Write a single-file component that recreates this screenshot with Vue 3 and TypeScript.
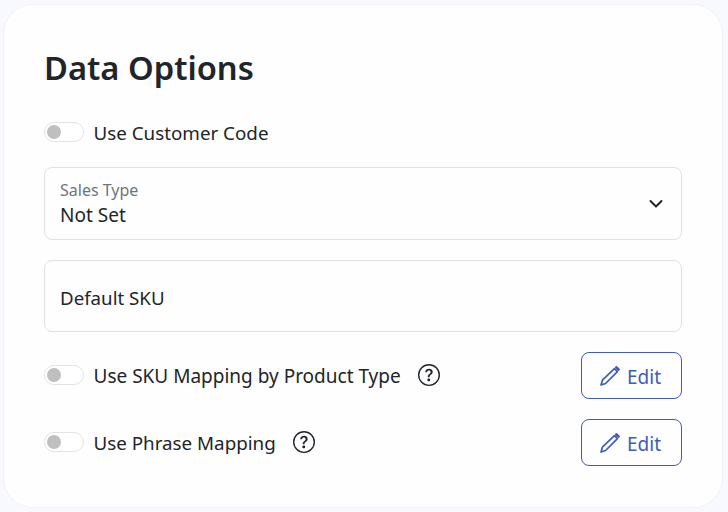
<script setup lang="ts">
const rows = [
  { label: "Use SKU Mapping by Product Type", tight: false },
  { label: "Use Phrase Mapping", tight: true },
];
</script>

<template>
  <div class="card">
    <h1 class="title">Data Options</h1>
    <div class="toggle-row first">
      <span class="switch"><span class="knob"></span></span>
      <span class="label tight">Use Customer Code</span>
    </div>
    <div class="field select">
      <div class="stack">
        <span class="small">Sales Type</span>
        <span class="value">Not Set</span>
      </div>
      <svg class="chev" width="16" height="16" viewBox="0 0 16 16" fill="none" stroke="#212529" stroke-width="2" stroke-linecap="round" stroke-linejoin="round"><path d="M2.5 5 8 10.5 13.5 5" /></svg>
    </div>
    <div class="field sku"><span class="value">Default SKU</span></div>
    <div v-for="r in rows" :key="r.label" class="map-row">
      <div class="toggle-row">
        <span class="switch"><span class="knob"></span></span>
        <span class="label" :class="{ tight: r.tight }">{{ r.label }}</span>
        <svg class="help" width="22" height="22" viewBox="0 0 16 16" fill="#212529">
          <path d="M8 15A7 7 0 1 1 8 1a7 7 0 0 1 0 14zm0 1A8 8 0 1 0 8 0a8 8 0 0 0 0 16z" />
          <path d="M5.255 5.786a.237.237 0 0 0 .241.247h.825c.138 0 .248-.113.266-.25.09-.656.54-1.134 1.342-1.134.686 0 1.314.343 1.314 1.168 0 .635-.374.927-.965 1.371-.673.489-1.206 1.06-1.168 1.987l.003.217a.25.25 0 0 0 .25.246h.811a.25.25 0 0 0 .25-.25v-.105c0-.718.273-.927 1.01-1.486.609-.463 1.244-.977 1.244-2.056 0-1.511-1.276-2.241-2.673-2.241-1.267 0-2.655.59-2.75 2.286zm1.557 5.763c0 .533.425.927 1.01.927.609 0 1.028-.394 1.028-.927 0-.552-.42-.94-1.029-.94-.584 0-1.009.388-1.009.94z" />
        </svg>
      </div>
      <button class="edit" type="button">
        <svg width="20" height="20" viewBox="0 0 20 20" fill="none" stroke="#3f5bbd">
          <path stroke-width="1.7" stroke-linejoin="round" d="M1 19 2.4 14.2 14.4 2.6 17.4 5.6 5.6 17.5Z" />
          <path stroke-width="2.8" stroke-linecap="round" d="M16.4 1.6 18.4 3.6" />
        </svg>
        <span class="edit-text">Edit</span>
      </button>
    </div>
  </div>
</template>

<style scoped>
.card {
  box-sizing: border-box;
  width: 720px;
  height: 504px;
  margin: 4px 0 0 3px;
  padding: 40px;
  background: #fefeff;
  border: 1px solid #f1f2f8;
  border-radius: 30px;
  font-family: "Noto Sans", sans-serif;
  color: #212529;
  display: flex;
  flex-direction: column;
}
.title {
  margin: 0;
  font-size: 32.7px;
  line-height: 46px;
  font-weight: 600;
}
.toggle-row {
  display: flex;
  align-items: center;
}
.first {
  margin-top: 30px;
  height: 24px;
}
.switch {
  box-sizing: border-box;
  width: 40px;
  height: 20px;
  margin-top: -2px;
  border: 1px solid #e3e3e3;
  border-radius: 10px;
  background: #fff;
  display: flex;
  align-items: center;
  padding-left: 2px;
  flex: none;
}
.knob {
  width: 14px;
  height: 14px;
  border-radius: 50%;
  background: #bfbfbf;
}
.label {
  margin-left: 9.5px;
  font-size: 19px;
  line-height: 24px;
}
.label.tight {
  font-size: 18.8px;
}
.field {
  box-sizing: border-box;
  border: 1px solid #dee2e6;
  border-radius: 8px;
  padding: 0 15px;
  display: flex;
  align-items: center;
}
.select {
  margin-top: 22px;
  height: 73px;
  justify-content: space-between;
}
.stack {
  display: flex;
  flex-direction: column;
  gap: 3px;
}
.small {
  font-size: 16px;
  line-height: 20px;
  color: #6c757d;
}
.value {
  font-size: 19px;
  line-height: 25px;
}
.chev {
  margin-right: 2px;
}
.sku {
  margin-top: 20px;
  height: 72px;
  padding-top: 2px;
}
.sku .value {
  font-size: 18.7px;
}
.map-row {
  margin-top: 20px;
  height: 47px;
  display: flex;
  align-items: center;
  justify-content: space-between;
}
.help {
  margin-left: 17px;
  margin-top: -2px;
}
.edit {
  box-sizing: border-box;
  width: 101px;
  height: 47px;
  border: 1px solid #3f5bbd;
  border-radius: 8px;
  background: transparent;
  color: #3f5bbd;
  font-family: inherit;
  font-size: 19px;
  display: flex;
  align-items: center;
  justify-content: center;
  gap: 7px;
  padding: 0 2px 0 0;
}
.edit-text {
  padding-top: 2px;
}
</style>

<style>
html, body {
  background: #f8f9fe;
}
</style>
